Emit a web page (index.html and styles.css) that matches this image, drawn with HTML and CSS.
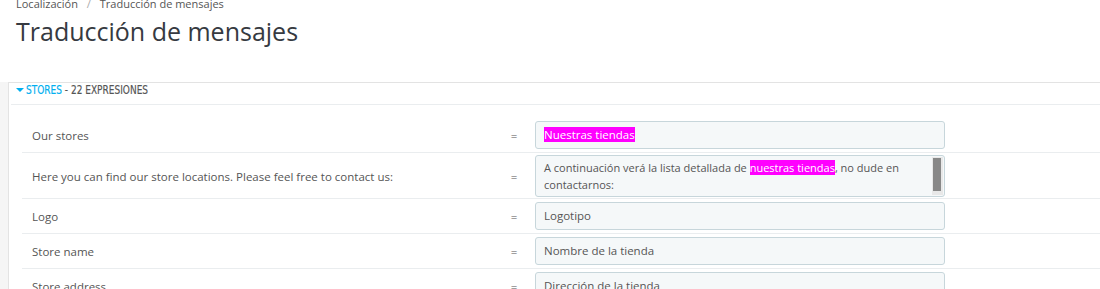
FILE: index.html
```html
<!DOCTYPE html>
<html lang="es">
<head>
    <meta charset="UTF-8">
    <title>Traducción de mensajes</title>
    <link rel="stylesheet" href="styles.css">
</head>
<body>
    <div class="page-head">
        <div class="breadcrumb">Localización <span class="sep">/</span> Traducción de mensajes</div>
        <h1>Traducción de mensajes</h1>
    </div>

    <div class="panel">
        <div class="panel-heading">
            <span class="caret"></span><span class="heading-text"><span class="module">Stores</span> - 22 expresiones</span>
        </div>

        <div class="rows">
            <div class="row">
                <div class="label">Our stores</div>
                <div class="eq">=</div>
                <div class="field"><div class="input"><mark>Nuestras tiendas</mark></div></div>
            </div>
            <div class="row row-tall">
                <div class="label">Here you can find our store locations. Please feel free to contact us:</div>
                <div class="eq">=</div>
                <div class="field">
                    <div class="input textarea">A continuación verá la lista detallada de <mark>nuestras tiendas</mark>, no dude en contactarnos:<span class="scroll"><span class="thumb"></span></span></div>
                </div>
            </div>
            <div class="row">
                <div class="label">Logo</div>
                <div class="eq">=</div>
                <div class="field"><div class="input">Logotipo</div></div>
            </div>
            <div class="row">
                <div class="label">Store name</div>
                <div class="eq">=</div>
                <div class="field"><div class="input">Nombre de la tienda</div></div>
            </div>
            <div class="row">
                <div class="label">Store address</div>
                <div class="eq">=</div>
                <div class="field"><div class="input">Dirección de la tienda</div></div>
            </div>
        </div>
    </div>
</body>
</html>
```

FILE: styles.css
```css
body {
    margin: 0;
    font-family: "Open Sans", sans-serif;
    font-size: 11.5px;
    color: #555;
    background: #fff;
    overflow: hidden;
}
.page-head {
    display: flow-root;
    padding: 0 16px;
    height: 82px;
}
.breadcrumb {
    margin-top: -4px;
    line-height: 16px;
    font-size: 11px;
    color: #555;
}
.breadcrumb .sep {
    color: #aaa;
    margin: 0 6px;
}
h1 {
    margin: 1px 0 0;
    font-size: 25px;
    font-weight: normal;
    color: #363a41;
    line-height: 36px;
}
.panel {
    margin-left: 8px;
    border-top: 1px solid #e3e3e3;
    border-left: 1px solid #e3e3e3;
    background: #fff;
    box-shadow: -8px 0 0 #f5f5f5;
    min-height: 300px;
}
.panel-heading {
    margin-left: 2px;
    padding-left: 5px;
    height: 21px;
    line-height: 14px;
    border-bottom: 1px solid #eaedef;
    font-family: "DejaVu Sans", sans-serif;
    font-size: 12.5px;
    text-transform: uppercase;
    color: #555;
    white-space: nowrap;
}
.heading-text {
    display: inline-block;
    transform: scaleX(0.72);
    transform-origin: left center;
    -webkit-text-stroke: 0.2px currentColor;
}
.caret {
    display: inline-block;
    width: 0;
    height: 0;
    border-left: 4px solid transparent;
    border-right: 4px solid transparent;
    border-top: 4px solid #00aff0;
    margin-right: 2px;
    vertical-align: 2px;
}
.module {
    color: #00aff0;
}
.rows {
    margin: 13px 0 0 13px;
}
.row {
    display: grid;
    grid-template-columns: 480px 24px 420px;
    align-items: center;
    border-bottom: 1px solid #eaedef;
    padding: 3px 0 3px;
}
.row-tall {
    padding: 2px 0 1px;
}
.label {
    padding-left: 10px;
}
.eq {
    text-align: center;
}
.field {
    padding-left: 9px;
}
.input {
    width: 400px;
    height: 26px;
    line-height: 26px;
    padding-left: 8px;
    background: #f5f8f9;
    border: 1px solid #c7d6db;
    border-radius: 3px;
    color: #555;
}
.textarea {
    position: relative;
    width: 380px;
    height: 37px;
    padding: 3px 20px 0 8px;
    font-size: 11px;
    line-height: 17px;
}
mark {
    background: #ff00ff;
    color: #fff;
}
.scroll {
    position: absolute;
    top: 1px;
    right: 1px;
    bottom: 1px;
    width: 11px;
    background: #e8e8e8;
}
.thumb {
    position: absolute;
    top: 1px;
    left: 1px;
    right: 2px;
    height: 33px;
    background: #888;
}
```
